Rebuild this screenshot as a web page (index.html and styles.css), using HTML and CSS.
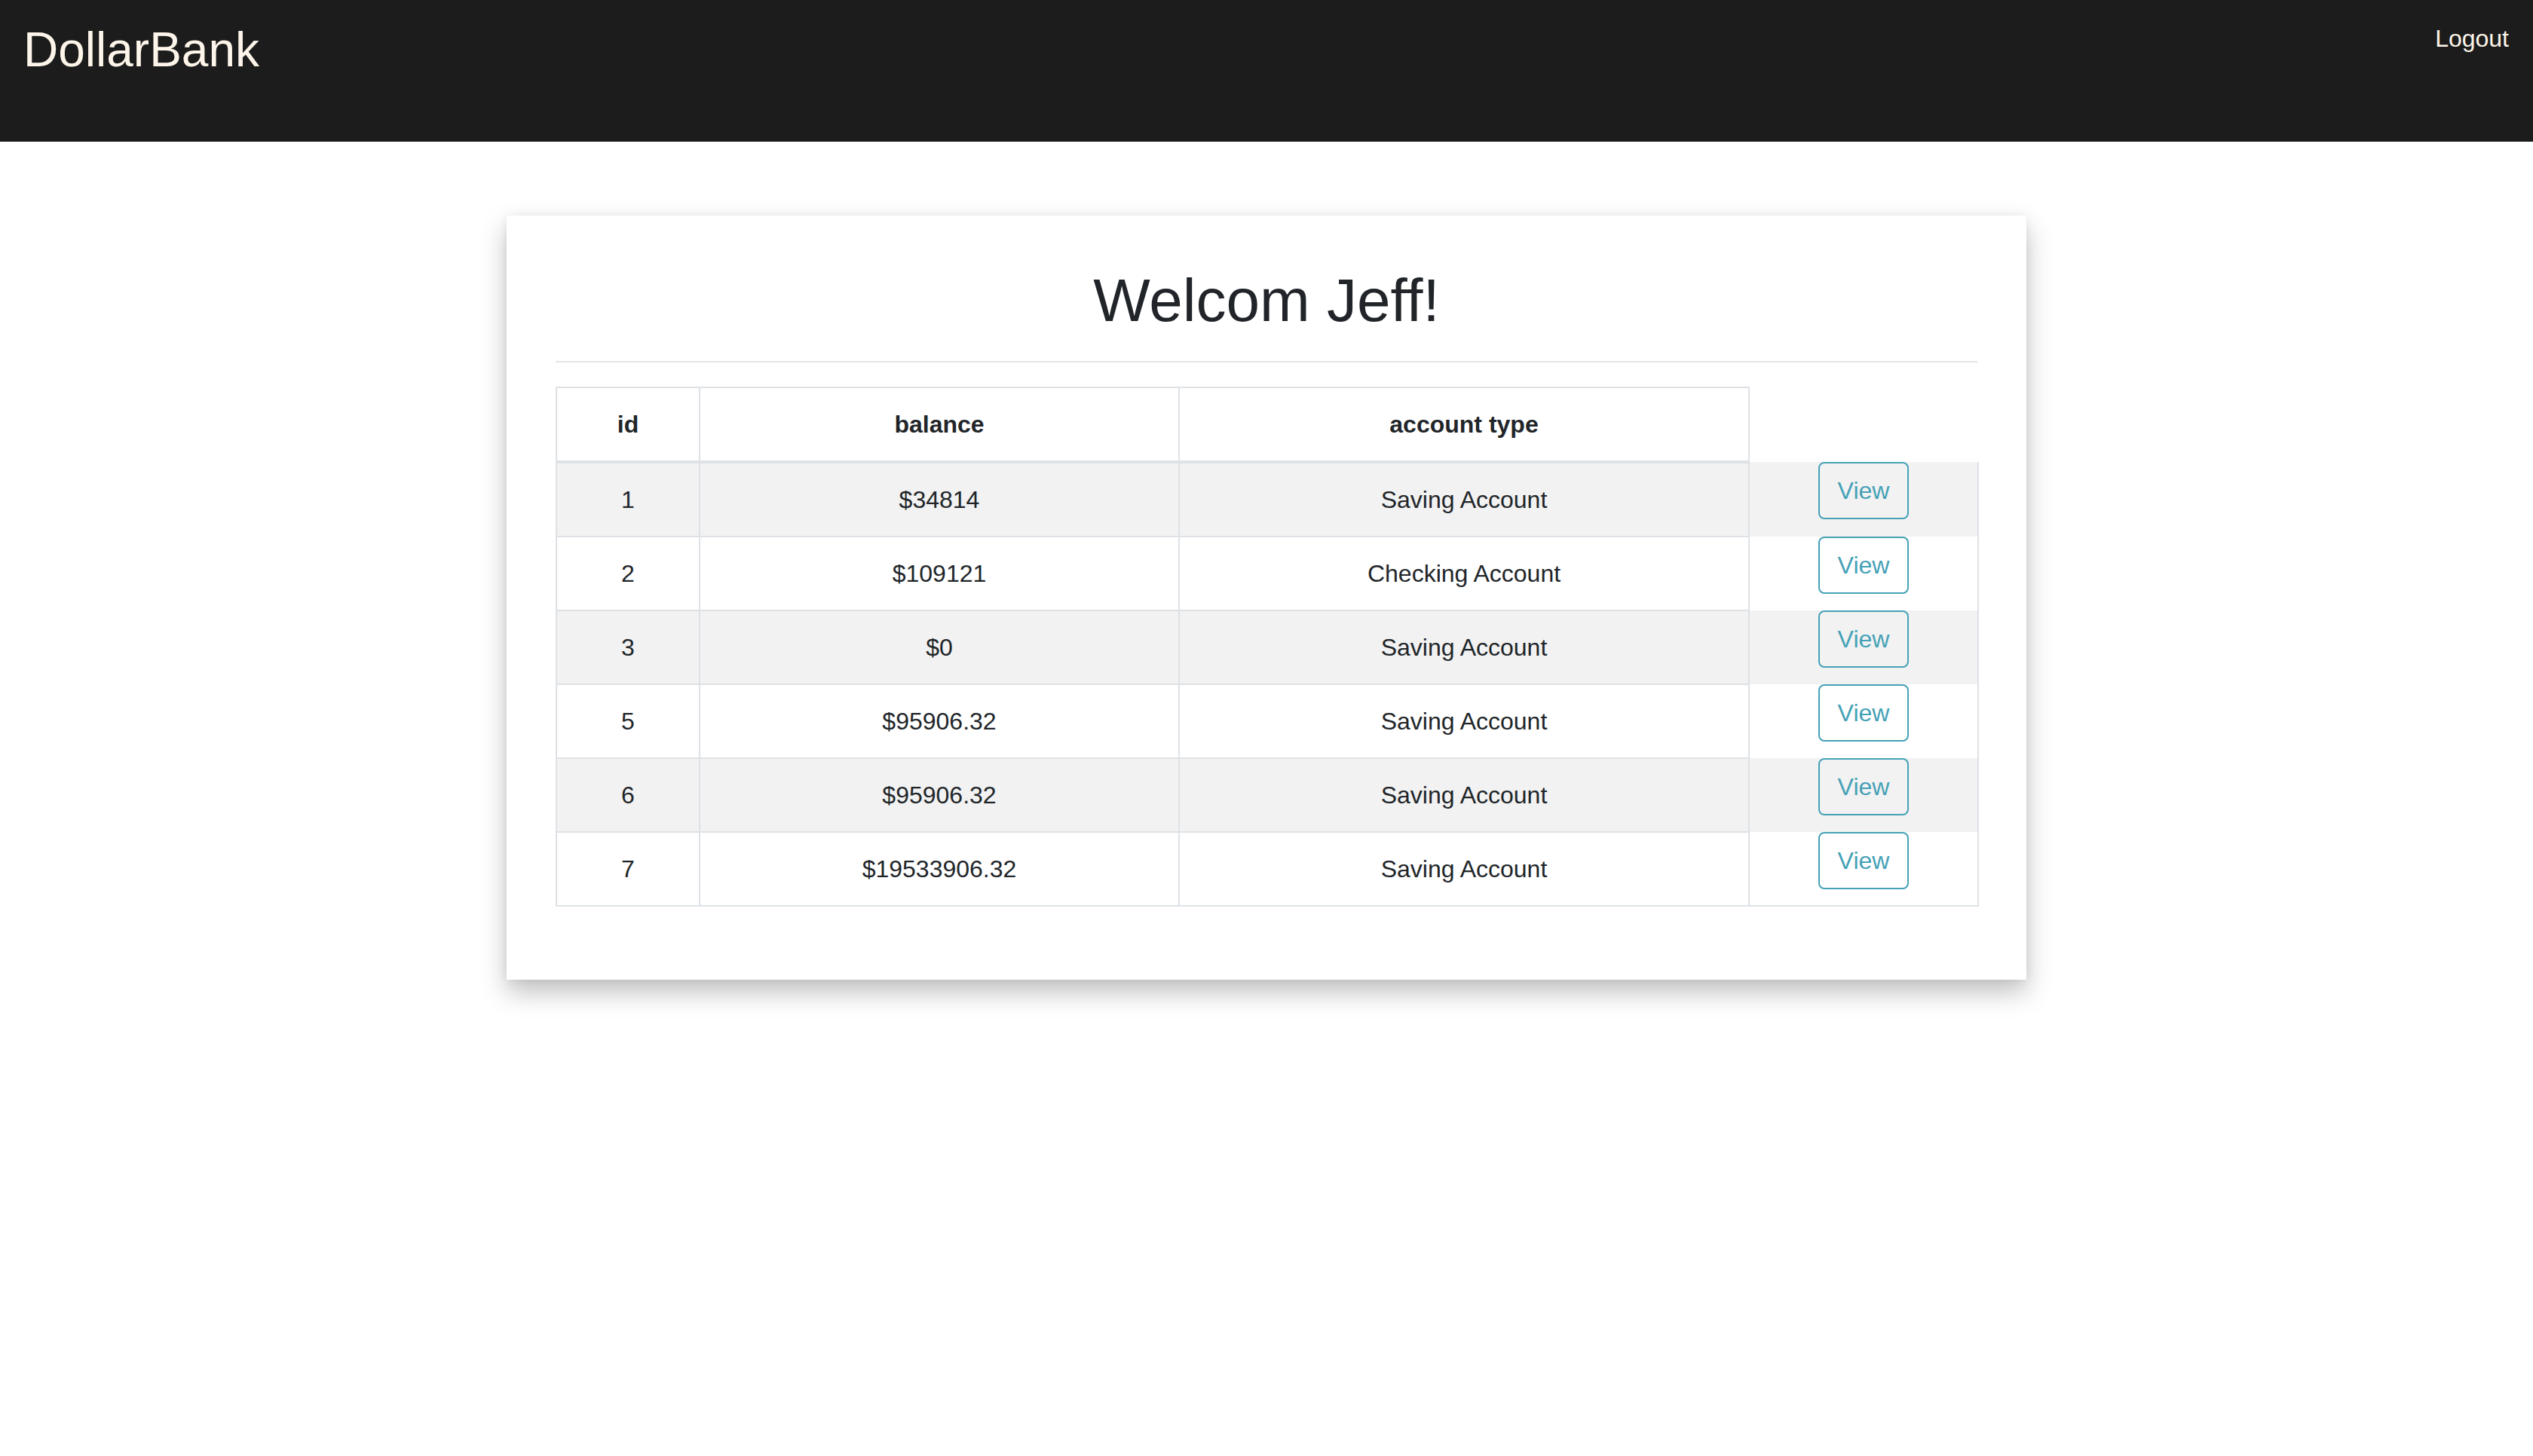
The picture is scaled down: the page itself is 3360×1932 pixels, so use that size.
FILE: index.html
```html
<!DOCTYPE html>
<html lang="en">
<head>
<meta charset="utf-8">
<title>DollarBank</title>
<link rel="stylesheet" href="styles.css">
</head>
<body>
<nav class="navbar">
  <a class="brand" href="#">DollarBank</a>
  <a class="nav-link" href="#">Logout</a>
</nav>
<main class="card">
  <h1 class="title">Welcom Jeff!</h1>
  <hr class="divider">
  <table class="accounts">
    <thead>
      <tr>
        <th class="c-id">id</th>
        <th class="c-bal">balance</th>
        <th class="c-type">account type</th>
        <th class="c-act blank"></th>
      </tr>
    </thead>
    <tbody>
      <tr><td>1</td><td>$34814</td><td>Saving Account</td><td class="act"><button class="btn-view">View</button></td></tr>
      <tr><td>2</td><td>$109121</td><td>Checking Account</td><td class="act"><button class="btn-view">View</button></td></tr>
      <tr><td>3</td><td>$0</td><td>Saving Account</td><td class="act"><button class="btn-view">View</button></td></tr>
      <tr><td>5</td><td>$95906.32</td><td>Saving Account</td><td class="act"><button class="btn-view">View</button></td></tr>
      <tr><td>6</td><td>$95906.32</td><td>Saving Account</td><td class="act"><button class="btn-view">View</button></td></tr>
      <tr class="last"><td>7</td><td>$19533906.32</td><td>Saving Account</td><td class="act"><button class="btn-view">View</button></td></tr>
    </tbody>
  </table>
</main>
</body>
</html>
```
FILE: styles.css
```css
* { box-sizing: border-box; }
html, body { margin: 0; padding: 0; background: #ffffff; }
body {
  font-family: "Liberation Sans", Arial, Helvetica, sans-serif;
  font-size: 32px;
  line-height: 48px;
  color: #212529;
  min-height: 1932px;
}
.navbar {
  height: 188px;
  background: #1c1c1c;
  display: flex;
  justify-content: space-between;
  align-items: flex-start;
  padding: 26px 32px 0 31px;
}
.brand {
  color: #fdf5e9;
  text-decoration: none;
  font-size: 64px;
  line-height: 80px;
}
.nav-link {
  color: #fdf5e9;
  text-decoration: none;
  font-size: 32px;
  line-height: 48px;
  margin-top: 1px;
}
.card {
  width: 2016px;
  margin: 98px auto 0;
  padding: 65px 65px 65px;
  background: #ffffff;
  box-shadow: 0 16px 32px rgba(0, 0, 0, 0.25), 0 0 12px rgba(0, 0, 0, 0.06);
}
.title {
  margin: 0 0 16px;
  font-size: 80px;
  line-height: 96px;
  font-weight: 500;
  text-align: center;
  color: #212529;
}
.divider {
  margin: 32px 0;
  border: 0;
  border-top: 2px solid #e5e5e5;
  height: 0;
}
.accounts {
  width: 1886px;
  table-layout: fixed;
  border-collapse: collapse;
  margin-bottom: 32px;
}
.c-id { width: 190px; }
.c-bal { width: 636px; }
.c-type { width: 756px; }
.c-act { width: 304px; }
.accounts th,
.accounts td {
  border: 2px solid #dee2e6;
  padding: 24px;
  text-align: center;
  vertical-align: middle;
  font-size: 32px;
  line-height: 48px;
}
.accounts thead th {
  font-weight: 700;
  border-bottom: 4px solid #dee2e6;
}
.accounts thead th.blank {
  border: none;
}
.accounts tbody tr:nth-child(odd) {
  background: #f2f2f2;
}
.accounts td.act {
  padding: 0;
  vertical-align: top;
  border-top: none;
  border-bottom: none;
  border-right: 2px solid #dee2e6;
}
.accounts tr.last td.act {
  border-bottom: 2px solid #dee2e6;
}
.btn-view {
  display: inline-block;
  font-family: "Liberation Sans", Arial, Helvetica, sans-serif;
  font-size: 32px;
  line-height: 48px;
  padding: 12px 24px;
  color: #45a1b6;
  background: transparent;
  border: 2px solid #45a1b6;
  border-radius: 8px;
  cursor: pointer;
}
```
